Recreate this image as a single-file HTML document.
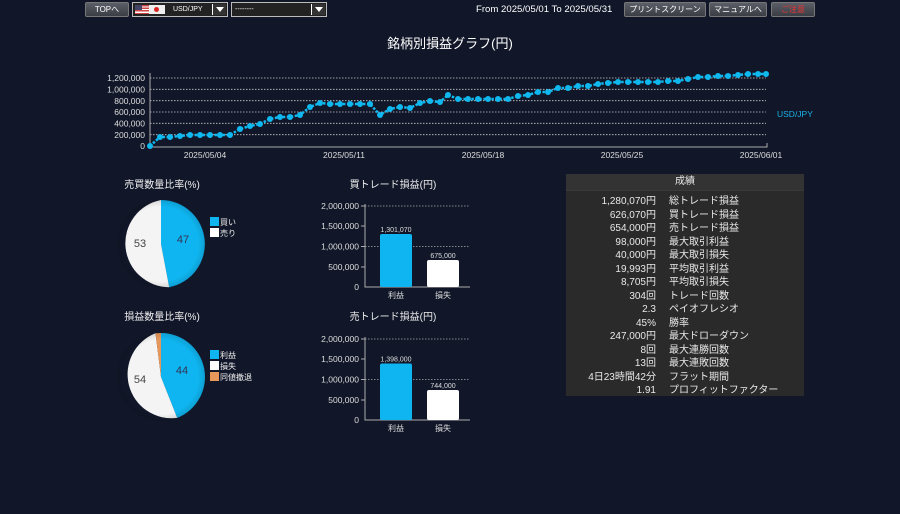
<!DOCTYPE html>
<html><head><meta charset="utf-8"><style>
body{margin:0;width:900px;height:514px;background:#111729;overflow:hidden;font-family:"Liberation Sans","Noto Sans CJK JP",sans-serif;color:#e8e8e8}
.btn{position:absolute;top:2px;height:15px;background:linear-gradient(#5a5e66,#3a3d44);border:1px solid #777;color:#fff;font-size:8px;line-height:13px;text-align:center;box-sizing:border-box;border-radius:2px;white-space:nowrap;overflow:hidden}
.sel{position:absolute;top:2px;height:15px;border:1px solid #aaa;background:#fff;box-sizing:border-box}
.ab{position:absolute;right:1px;top:1px;width:13px;height:11px;background:#333;border-left:1px solid #fff}
.ab:after{content:"";position:absolute;left:3px;top:3px;border-left:4px solid transparent;border-right:4px solid transparent;border-top:5px solid #fff}
#tbl{position:absolute;left:566px;top:174px;width:238px;height:222px;background:#2a2a2a}
#tbl .h{height:16px;background:#333;text-align:center;font-size:10px;line-height:16px;border-bottom:1px solid #3a3a3a}
#tbl .r{height:13.5px;font-size:10px;line-height:13.5px;position:relative}
#tbl .v{position:absolute;right:148px;text-align:right;white-space:nowrap}
#tbl .l{position:absolute;left:103px;white-space:nowrap}
</style></head><body>
<div class="btn" style="left:85px;width:44px">TOPへ</div>
<div class="sel" style="left:132px;width:96px;background:#222;border-color:#bbb">
 <div style="position:absolute;left:2px;top:2px;width:30px;height:9px;background:#eee"><div style="position:absolute;left:0;top:0;width:14px;height:9px;background:repeating-linear-gradient(#c44 0 1.3px,#fff 1.3px 2.6px)"></div><div style="position:absolute;left:0;top:0;width:7px;height:5px;background:#446"></div><div style="position:absolute;left:19px;top:2px;width:5px;height:5px;border-radius:50%;background:#d22"></div></div>
 <div style="position:absolute;left:40px;top:0;font-size:7px;color:#fff;line-height:13px">USD/JPY</div><div class="ab"></div></div>
<div class="sel" style="left:231px;width:96px;background:#222;border-color:#bbb"><div style="position:absolute;left:3px;top:0;font-size:7px;color:#fff;line-height:13px">--------</div><div class="ab"></div></div>
<div style="position:absolute;left:476px;top:4px;font-size:9.6px;color:#fff;white-space:nowrap">From 2025/05/01 To 2025/05/31</div>
<div class="btn" style="left:624px;width:82px">プリントスクリーン</div>
<div class="btn" style="left:709px;width:58px">マニュアルへ</div>
<div class="btn" style="left:771px;width:44px;color:#e33">ご注意</div>
<div style="position:absolute;left:0;width:900px;top:33px;text-align:center;font-size:13px;color:#fff">銘柄別損益グラフ(円)</div>
<svg width="900" height="514" style="position:absolute;left:0;top:0" font-family="Liberation Sans,Noto Sans CJK JP,sans-serif">
<defs><radialGradient id="sh" cx="50%" cy="50%" r="50%"><stop offset="85%" stop-color="#000" stop-opacity="0"/><stop offset="100%" stop-color="#000" stop-opacity=".12"/></radialGradient></defs>
<g stroke="#ccc" stroke-width="0.8" stroke-dasharray="1.5,1.5">
<line x1="150" x2="766" y1="134.7" y2="134.7"/><line x1="150" x2="766" y1="123.3" y2="123.3"/><line x1="150" x2="766" y1="112" y2="112"/><line x1="150" x2="766" y1="100.7" y2="100.7"/><line x1="150" x2="766" y1="89.3" y2="89.3"/><line x1="150" x2="766" y1="78" y2="78"/>
</g>
<path d="M150 73V147H767V143" stroke="#aaa" fill="none"/>
<g font-size="8.5" fill="#ddd" text-anchor="end"><text x="145" y="149">0</text><text x="145" y="138">200,000</text><text x="145" y="126.5">400,000</text><text x="145" y="115">600,000</text><text x="145" y="104">800,000</text><text x="145" y="92.5">1,000,000</text><text x="145" y="81">1,200,000</text></g>
<g font-size="8.5" fill="#ddd" text-anchor="middle"><text x="205" y="158">2025/05/04</text><text x="344" y="158">2025/05/11</text><text x="483" y="158">2025/05/18</text><text x="622" y="158">2025/05/25</text><text x="761" y="158">2025/06/01</text></g>
<text x="777" y="117" font-size="8.5" fill="#1ab0e8">USD/JPY</text>
<polyline id="ln" fill="none" stroke="#10b8f0" stroke-width="2.5" stroke-dasharray="2.5,1.5" points="150,146 160,137 170,137 180,136 190,135 200,135 210,135 220,135 230,135 240,129 250,126 260,124 270,119 280,117 290,117 300,115 310,107 320,103 330,104 340,104 350,104 360,104 370,104 380,115 390,109 400,107 410,108 420,103 430,101 440,102 448,95 458,99 468,99 478,99 488,99 498,99 508,99 518,96 528,95 538,92 548,92 558,88 568,88 578,86 588,86 598,84 608,83 618,82 628,82 638,82 648,82 658,82 668,81 678,81 688,79 698,77 708,77 718,76 728,76 738,75 748,74 758,74 766,74"/>
<g id="dots" fill="#10b8f0"></g>
<text x="162" y="188" font-size="10" fill="#eee" text-anchor="middle">売買数量比率(%)</text>
<path d="M161 244L161 200A44 44 0 0 1 169.2 287.2Z" fill="#0fb5f0"/>
<path d="M161 244L169.2 287.2A44 44 0 0 1 161 200Z" fill="#f4f4f4"/>
<circle cx="161" cy="244" r="44" fill="url(#sh)"/>
<text x="183" y="243" font-size="11" fill="#335" text-anchor="middle">47</text><text x="140" y="247" font-size="11" fill="#444" text-anchor="middle">53</text>
<rect x="210" y="217" width="9" height="9" fill="#0fb5f0"/><rect x="210" y="228" width="9" height="9" fill="#fff"/>
<text x="220" y="225" font-size="8" fill="#eee">買い</text><text x="220" y="236" font-size="8" fill="#eee">売り</text>
<text x="162" y="320" font-size="10" fill="#eee" text-anchor="middle">損益数量比率(%)</text>
<path d="M161 377L161 333A44 44 0 0 1 177.2 417.9Z" fill="#0fb5f0"/>
<path d="M161 377L177.2 417.9A44 44 0 0 1 155.5 333.3Z" fill="#f4f4f4"/>
<path d="M161 377L155.5 333.3A44 44 0 0 1 161 333Z" fill="#e8975a"/>
<circle cx="161" cy="377" r="44" fill="url(#sh)"/>
<text x="182" y="374" font-size="11" fill="#335" text-anchor="middle">44</text><text x="140" y="383" font-size="11" fill="#444" text-anchor="middle">54</text>
<rect x="210" y="350" width="9" height="9" fill="#0fb5f0"/><rect x="210" y="361" width="9" height="9" fill="#fff"/><rect x="210" y="372" width="9" height="9" fill="#e8975a"/>
<text x="220" y="358" font-size="8" fill="#eee">利益</text><text x="220" y="369" font-size="8" fill="#eee">損失</text><text x="220" y="380" font-size="8" fill="#eee">同値撤退</text>
<text x="393" y="188" font-size="10" fill="#eee" text-anchor="middle">買トレード損益(円)</text>
<g stroke="#aaa" stroke-width="0.8" stroke-dasharray="1.5,1.5"><line x1="365" x2="470" y1="206" y2="206"/><line x1="365" x2="470" y1="246.5" y2="246.5"/></g>
<path d="M365 204V287H470M361 206H365M361 226H365M361 246.5H365M361 267H365" stroke="#aaa" fill="none"/>
<g font-size="8.5" fill="#ddd" text-anchor="end"><text x="359" y="290">0</text><text x="359" y="270">500,000</text><text x="359" y="249.5">1,000,000</text><text x="359" y="229">1,500,000</text><text x="359" y="209">2,000,000</text></g>
<rect x="380" y="234" width="32" height="53" rx="2" fill="#0fb5f0"/><rect x="427" y="260" width="32" height="27" rx="2" fill="#fff"/>
<g font-size="7" fill="#ddd" text-anchor="middle"><text x="396" y="232">1,301,070</text><text x="443" y="258">675,000</text></g>
<g font-size="8" fill="#ddd" text-anchor="middle"><text x="396" y="298">利益</text><text x="443" y="298">損失</text></g>
<text x="393" y="320" font-size="10" fill="#eee" text-anchor="middle">売トレード損益(円)</text>
<g stroke="#aaa" stroke-width="0.8" stroke-dasharray="1.5,1.5"><line x1="365" x2="470" y1="339" y2="339"/><line x1="365" x2="470" y1="379.5" y2="379.5"/></g>
<path d="M365 337V420H470M361 339H365M361 359H365M361 379.5H365M361 400H365" stroke="#aaa" fill="none"/>
<g font-size="8.5" fill="#ddd" text-anchor="end"><text x="359" y="423">0</text><text x="359" y="403">500,000</text><text x="359" y="382.5">1,000,000</text><text x="359" y="362">1,500,000</text><text x="359" y="342">2,000,000</text></g>
<rect x="380" y="363.5" width="32" height="56.5" rx="2" fill="#0fb5f0"/><rect x="427" y="390" width="32" height="30" rx="2" fill="#fff"/>
<g font-size="7" fill="#ddd" text-anchor="middle"><text x="396" y="361.5">1,398,000</text><text x="443" y="388">744,000</text></g>
<g font-size="8" fill="#ddd" text-anchor="middle"><text x="396" y="431">利益</text><text x="443" y="431">損失</text></g>
</svg>
<div id="tbl"><div class="h">成績</div><div style="height:4px"></div>
<div class="r"><span class="v">1,280,070円</span><span class="l">総トレード損益</span></div>
<div class="r"><span class="v">626,070円</span><span class="l">買トレード損益</span></div>
<div class="r"><span class="v">654,000円</span><span class="l">売トレード損益</span></div>
<div class="r"><span class="v">98,000円</span><span class="l">最大取引利益</span></div>
<div class="r"><span class="v">40,000円</span><span class="l">最大取引損失</span></div>
<div class="r"><span class="v">19,993円</span><span class="l">平均取引利益</span></div>
<div class="r"><span class="v">8,705円</span><span class="l">平均取引損失</span></div>
<div class="r"><span class="v">304回</span><span class="l">トレード回数</span></div>
<div class="r"><span class="v">2.3</span><span class="l">ペイオフレシオ</span></div>
<div class="r"><span class="v">45%</span><span class="l">勝率</span></div>
<div class="r"><span class="v">247,000円</span><span class="l">最大ドローダウン</span></div>
<div class="r"><span class="v">8回</span><span class="l">最大連勝回数</span></div>
<div class="r"><span class="v">13回</span><span class="l">最大連敗回数</span></div>
<div class="r"><span class="v">4日23時間42分</span><span class="l">フラット期間</span></div>
<div class="r"><span class="v">1.91</span><span class="l">プロフィットファクター</span></div>
</div>
<script>
var p=document.getElementById('ln').getAttribute('points').trim().split(/\s+/),g=document.getElementById('dots'),s='';
p.forEach(function(q){var a=q.split(',');s+='<circle cx="'+a[0]+'" cy="'+a[1]+'" r="3"/>';});g.innerHTML=s;
</script>
</body></html>
